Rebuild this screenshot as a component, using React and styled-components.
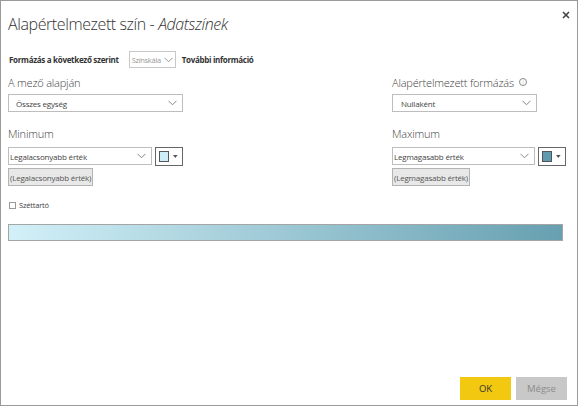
import React from 'react';
import styled, { createGlobalStyle } from 'styled-components';

const GlobalStyle = createGlobalStyle`
    html, body {
        margin: 0;
        padding: 0;
        background: #ffffff;
    }
    body {
        font-family: 'Open Sans', 'Noto Sans', sans-serif;
        color: #333;
    }
`;

const Chevron = ({ color = '#888' }) => (
    <svg width="9" height="6" viewBox="0 0 9 6">
        <path d="M0.5 0.8 L4.5 4.8 L8.5 0.8" fill="none" stroke={color} strokeWidth="1" />
    </svg>
);

const Caret = () => (
    <svg width="5" height="3" viewBox="0 0 5 3">
        <path d="M0 0 H5 L2.5 3 Z" fill="#555" />
    </svg>
);

const Select = ({ text, width, indent }) => (
    <SelectBox width={width} indent={indent}>
        <span>{text}</span>
        <Chevron />
    </SelectBox>
);

const ColorPicker = ({ color }) => (
    <ColorButton>
        <Swatch color={color} />
        <Caret />
    </ColorButton>
);

const App = () => {
    return (
        <>
            <GlobalStyle />
            <Dialog>
                <Header>
                    <Title>
                        Alapértelmezett szín - <em>Adatszínek</em>
                    </Title>
                    <CloseButton>
                        <svg width="8" height="8" viewBox="0 0 8 8">
                            <path d="M1 1 L7 7 M7 1 L1 7" stroke="#444" strokeWidth="1.6" />
                        </svg>
                    </CloseButton>
                </Header>

                <FormatRow>
                    <BoldText>Formázás a következő szerint</BoldText>
                    <SmallSelect>
                        <span>Színskála</span>
                        <Chevron color="#999" />
                    </SmallSelect>
                    <BoldText>További információ</BoldText>
                </FormatRow>

                <Columns>
                    <Column>
                        <Label>A mező alapján</Label>
                        <Select text="Összes egység" width="175px" indent="7px" />
                        <Label spaced>Minimum</Label>
                        <PickRow>
                            <Select text="Legalacsonyabb érték" width="144px" indent="1px" />
                            <ColorPicker color="#cdeef7" />
                        </PickRow>
                        <GrayButton>(Legalacsonyabb érték)</GrayButton>
                    </Column>
                    <Column>
                        <Label>
                            Alapértelmezett formázás
                            <InfoIcon>i</InfoIcon>
                        </Label>
                        <Select text="Nullaként" width="145px" indent="8px" />
                        <Label spaced>Maximum</Label>
                        <PickRow>
                            <Select text="Legmagasabb érték" width="143px" indent="1px" />
                            <ColorPicker color="#5f9bb0" />
                        </PickRow>
                        <GrayButton>(Legmagasabb érték)</GrayButton>
                    </Column>
                </Columns>

                <CheckRow>
                    <CheckBox />
                    <span>Széttartó</span>
                </CheckRow>

                <GradientBar />

                <Footer>
                    <FooterButton primary>OK</FooterButton>
                    <FooterButton>Mégse</FooterButton>
                </Footer>
            </Dialog>
        </>
    );
};

const Dialog = styled.div`
    width: 578px;
    height: 406px;
    box-sizing: border-box;
    border: 1px solid #9a9a9a;
    background: #fff;
    display: flex;
    flex-direction: column;
    padding: 0 10px 5px 6px;
`;

const Header = styled.div`
    display: flex;
    justify-content: space-between;
    align-items: flex-start;
`;

const Title = styled.h1`
    margin: 13px 0 0 1px;
    font-size: 16px;
    line-height: 21px;
    letter-spacing: -0.4px;
    font-weight: 300;
    color: #333;
    white-space: nowrap;

    em {
        font-style: italic;
    }
`;

const CloseButton = styled.div`
    margin: 8px -5px 0 0;
    width: 12px;
    height: 12px;
    display: flex;
    align-items: center;
    justify-content: center;
`;

const FormatRow = styled.div`
    display: flex;
    align-items: center;
    margin-top: 16px;
    height: 17px;
    padding-left: 2px;
`;

const BoldText = styled.span`
    font-size: 8px;
    letter-spacing: -0.3px;
    font-weight: 700;
    color: #333;
    white-space: nowrap;
`;

const SmallSelect = styled.div`
    margin: 0 6px 0 10px;
    width: 47px;
    height: 17px;
    box-sizing: border-box;
    border: 1px solid #c8c8c8;
    display: flex;
    align-items: center;
    justify-content: space-between;
    padding: 0 2px 0 2px;
    font-size: 7.5px;
    letter-spacing: -0.3px;
    color: #999;
    white-space: nowrap;
`;

const Columns = styled.div`
    display: flex;
    justify-content: space-between;
    margin-top: 6px;
    padding-left: 1px;
`;

const Column = styled.div`
    width: 175px;
    display: flex;
    flex-direction: column;
    align-items: flex-start;
`;

const Label = styled.div`
    display: flex;
    align-items: center;
    height: 16px;
    margin-top: ${({ spaced }) => (spaced ? '13px' : '0')};
    margin-bottom: ${({ spaced }) => (spaced ? '6px' : '4px')};
    font-size: 11px;
    letter-spacing: -0.2px;
    font-weight: 300;
    color: #444;
    white-space: nowrap;
`;

const InfoIcon = styled.span`
    margin-left: 5px;
    width: 6px;
    height: 6px;
    border: 1px solid #888;
    border-radius: 50%;
    font-size: 5px;
    line-height: 6px;
    text-align: center;
    color: #777;
`;

const SelectBox = styled.div`
    width: ${({ width }) => width};
    height: 18px;
    box-sizing: border-box;
    border: 1px solid #bdbdbd;
    display: flex;
    align-items: center;
    justify-content: space-between;
    padding: 0 5px 0 ${({ indent }) => indent};
    font-size: 8px;
    letter-spacing: -0.2px;
    color: #444;
    white-space: nowrap;
`;

const PickRow = styled.div`
    display: flex;
    align-items: flex-start;
    gap: 3px;
`;

const ColorButton = styled.div`
    width: 28px;
    height: 19px;
    box-sizing: border-box;
    border: 1px solid #666;
    display: flex;
    align-items: center;
    padding: 0 4px 0 3px;
    gap: 4px;
`;

const Swatch = styled.div`
    width: 11px;
    height: 11px;
    box-sizing: border-box;
    border: 1px solid #555;
    background: ${({ color }) => color};
`;

const GrayButton = styled.div`
    margin-top: 2px;
    height: 18px;
    box-sizing: border-box;
    padding: 0 1px;
    border: 1px solid #b4b4b4;
    background: #e8e8e8;
    display: flex;
    align-items: center;
    font-size: 8px;
    letter-spacing: -0.2px;
    color: #555;
    white-space: nowrap;
`;

const CheckRow = styled.div`
    display: flex;
    align-items: center;
    gap: 3px;
    margin-top: 14px;
    padding-left: 2px;
    font-size: 7.5px;
    letter-spacing: -0.2px;
    color: #444;
`;

const CheckBox = styled.div`
    width: 7px;
    height: 7px;
    border: 1px solid #999;
    box-sizing: border-box;
`;

const GradientBar = styled.div`
    margin-top: 14px;
    margin-left: 1px;
    width: 555px;
    height: 17px;
    box-sizing: border-box;
    border: 1px solid #a5a5a5;
    background: linear-gradient(to right, #d2f0f8, #67a0b1);
`;

const Footer = styled.div`
    margin-top: auto;
    display: flex;
    justify-content: flex-end;
    gap: 5px;
`;

const FooterButton = styled.div`
    width: 51px;
    height: 23px;
    display: flex;
    align-items: center;
    justify-content: center;
    font-size: 9.5px;
    background: ${({ primary }) => (primary ? '#f2c811' : '#c8c8c8')};
    color: ${({ primary }) => (primary ? '#333' : '#8c8c8c')};
`;

export default App;
